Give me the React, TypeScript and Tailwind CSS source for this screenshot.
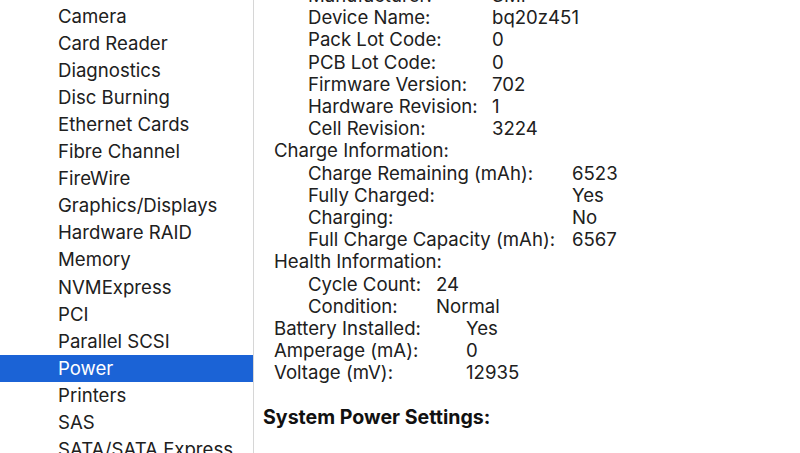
import React from "react";

const sidebar = [
  "Camera",
  "Card Reader",
  "Diagnostics",
  "Disc Burning",
  "Ethernet Cards",
  "Fibre Channel",
  "FireWire",
  "Graphics/Displays",
  "Hardware RAID",
  "Memory",
  "NVMExpress",
  "PCI",
  "Parallel SCSI",
  "Power",
  "Printers",
  "SAS",
  "SATA/SATA Express",
];

type Row = [string, string];

function Group({ rows, col, indent }: { rows: Row[]; col: string; indent: string }) {
  return (
    <div className={`grid ${col} ${indent}`}>
      {rows.map(([k, v]) => (
        <React.Fragment key={k}>
          <div className="whitespace-nowrap">{k}</div>
          <div className="whitespace-nowrap">{v}</div>
        </React.Fragment>
      ))}
    </div>
  );
}

export default function App() {
  return (
    <div
      className="flex h-[453px] w-[800px] overflow-hidden bg-white text-[#202020]"
      style={{ fontFamily: "Inter, 'Liberation Sans', sans-serif" }}
    >
      <div className="w-[254px] shrink-0 border-r border-[#d6d6d6] pt-[3px] text-[18.6px]">
        {sidebar.map((s) => (
          <div
            key={s}
            className={`flex h-[27.1px] items-center pl-[58px] whitespace-nowrap ${
              s === "Power" ? "bg-[#1b63d6] text-white" : ""
            }`}
          >
            {s}
          </div>
        ))}
      </div>
      <div className="flex-1 overflow-hidden pl-[20px] text-[18.6px] leading-[22.2px]">
        <div className="-mt-[16px]">
          <Group
            indent="pl-[34px]"
            col="grid-cols-[184px_auto]"
            rows={[
              ["Manufacturer:", "SMP"],
              ["Device Name:", "bq20z451"],
              ["Pack Lot Code:", "0"],
              ["PCB Lot Code:", "0"],
              ["Firmware Version:", "702"],
              ["Hardware Revision:", "1"],
              ["Cell Revision:", "3224"],
            ]}
          />
          <div>Charge Information:</div>
          <Group
            indent="pl-[34px]"
            col="grid-cols-[264px_auto]"
            rows={[
              ["Charge Remaining (mAh):", "6523"],
              ["Fully Charged:", "Yes"],
              ["Charging:", "No"],
              ["Full Charge Capacity (mAh):", "6567"],
            ]}
          />
          <div>Health Information:</div>
          <Group
            indent="pl-[34px]"
            col="grid-cols-[128px_auto]"
            rows={[
              ["Cycle Count:", "24"],
              ["Condition:", "Normal"],
            ]}
          />
          <Group
            indent=""
            col="grid-cols-[192px_auto]"
            rows={[
              ["Battery Installed:", "Yes"],
              ["Amperage (mA):", "0"],
              ["Voltage (mV):", "12935"],
            ]}
          />
          <div className="h-[22.2px]" />
          <div className="-ml-[11px] text-[19.6px] font-bold text-[#111]">System Power Settings:</div>
        </div>
      </div>
    </div>
  );
}
